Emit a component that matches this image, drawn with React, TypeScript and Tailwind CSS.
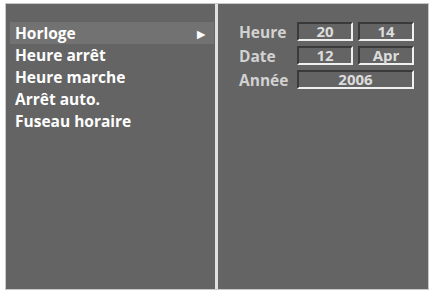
export default function App() {
  const font = { fontFamily: '"Open Sans", "Liberation Sans", sans-serif' };
  const items = ["Horloge", "Heure arrêt", "Heure marche", "Arrêt auto.", "Fuseau horaire"];
  const box =
    "h-[19px] flex items-center justify-center border-t-2 border-l-2 border-t-[#3a3a3a] border-l-[#3a3a3a] border-b-2 border-r-2 border-b-[#f0f0f0] border-r-[#f0f0f0] text-[15px] font-bold text-[#dcdcdc] leading-none";
  return (
    <div className="w-[431px] h-[293px] bg-white pt-[3px] pl-[5px]" style={font}>
      <div className="flex w-[424px] h-[287px] border border-[#c8c8c8] bg-[#d8d8d8]">
        <div className="w-[209px] h-full bg-[#646464] pt-[18px] pl-[4px] pr-[1px]">
          {items.map((t, i) => (
            <div
              key={t}
              className={`h-[22px] flex items-center justify-between pl-[5px] pr-[6px] pt-[2px] text-[15.5px] font-bold text-white leading-none ${i === 0 ? "bg-[#727272]" : ""}`}
            >
              <span>{t}</span>
              {i === 0 && <span className="text-[14px]">►</span>}
            </div>
          ))}
        </div>
        <div className="w-[3px] h-full bg-[#e0e0e0]" />
        <div className="w-[210px] h-full bg-[#646464] pt-[18px] pl-[21px]">
          <div className="grid grid-cols-[58px_56px_5px_56px] gap-y-[5px] items-center">
            <div className="text-[15.5px] font-bold text-[#d2d2d2] leading-none pt-[2px]">Heure</div>
            <div className={box}>20</div>
            <div />
            <div className={box}>14</div>
            <div className="text-[15.5px] font-bold text-[#d2d2d2] leading-none pt-[2px]">Date</div>
            <div className={box}>12</div>
            <div />
            <div className={box}>Apr</div>
            <div className="text-[15.5px] font-bold text-[#d2d2d2] leading-none pt-[2px]">Année</div>
            <div className={`${box} col-span-3`}>2006</div>
          </div>
        </div>
      </div>
    </div>
  );
}
